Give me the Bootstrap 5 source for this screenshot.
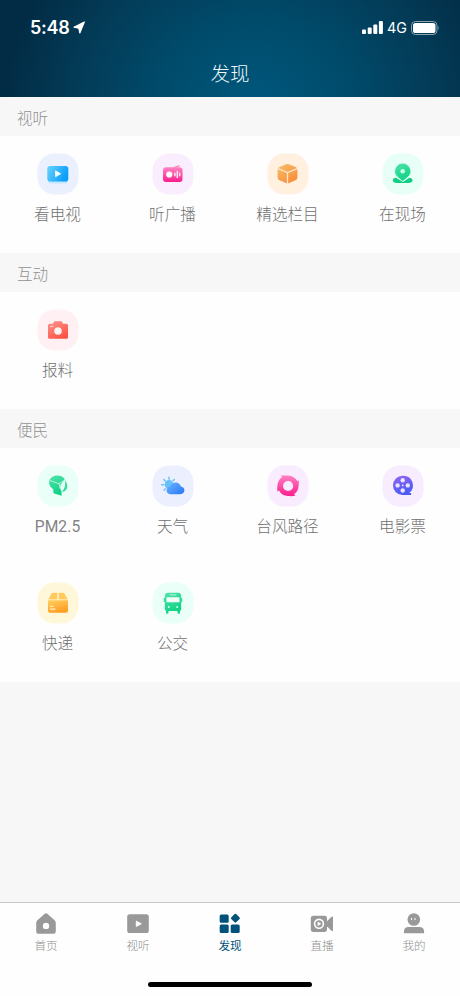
<!DOCTYPE html>
<html lang="zh-CN">
<head>
<meta charset="utf-8">
<meta name="viewport" content="width=device-width, initial-scale=1">
<title>发现</title>
<link href="https://cdn.jsdelivr.net/npm/bootstrap@5.3.0/dist/css/bootstrap.min.css" rel="stylesheet">
<style>
  body{font-family:"Liberation Sans","Noto Sans CJK SC",sans-serif;font-weight:300;background:#f7f7f7;overflow:hidden}
  svg{display:block;flex:none}
  .screen{width:460px;height:996px}
  .top-area{height:97.4px;background:radial-gradient(ellipse 250px 220px at 255px 105px,#00587d 0,#004b6b 38%,#033b57 72%,#022c45 100%)}
  .status{height:55px;padding:0 20px 0 30px}
  .clock{font:600 18px/20px Inter,sans-serif;letter-spacing:-.3px}
  .net{font:400 14.3px/16px Inter,sans-serif}
  .page-title{font-size:19.5px;line-height:39px;color:#eef7fa}
  .sec-title{height:39px;padding-left:17px;font-size:15.6px;line-height:44px;color:#919191}
  .sec-title + .row{background:#fefefe}
  .tile{height:117px;padding-top:17px}
  .tile-name{font-size:15.6px;line-height:22px;margin-top:9px;color:#707070}
  .latin{font-family:Roboto,sans-serif;font-weight:400;color:#838383;letter-spacing:.1px}
  .tabs{height:94px;background:#fefefe;border-top:1px solid #c8c8c8}
  .tab{padding-top:8px;color:#8e8e8e;font-size:11.6px;line-height:16px}
  .tab.on{color:#00527a;font-weight:400}
  .tab svg{margin-bottom:3px}
  .home-bar{width:164px;height:5px;margin-bottom:9px;background:#000}
</style>
<script src="https://cdn.jsdelivr.net/npm/bootstrap@5.3.0/dist/js/bootstrap.bundle.min.js"></script>
</head>
<body>
<svg width="0" height="0" class="position-absolute" aria-hidden="true">
  <defs>
    <linearGradient id="blue" x2="1" y2=".4"><stop stop-color="#68d4fb"/><stop offset="1" stop-color="#0a9dfb"/></linearGradient>
    <linearGradient id="pink" x2="0" y2="1"><stop stop-color="#ff83c2"/><stop offset="1" stop-color="#f91c8c"/></linearGradient>
    <linearGradient id="orange" x2=".7" y2="1"><stop stop-color="#f5c06a"/><stop offset="1" stop-color="#fb8c38"/></linearGradient>
    <linearGradient id="green" x2=".4" y2="1"><stop stop-color="#52e3ab"/><stop offset="1" stop-color="#0fd285"/></linearGradient>
    <linearGradient id="red" x2=".6" y2="1"><stop stop-color="#ff9690"/><stop offset="1" stop-color="#fb5444"/></linearGradient>
    <linearGradient id="cloud" x2="1" y2=".7"><stop stop-color="#6cb5ff"/><stop offset="1" stop-color="#2f7cf8"/></linearGradient>
    <linearGradient id="violet" x2=".3" y2="1"><stop stop-color="#9663ef"/><stop offset="1" stop-color="#4b5bf9"/></linearGradient>
    <linearGradient id="yellow" x2=".4" y2="1"><stop stop-color="#ffd062"/><stop offset="1" stop-color="#ff9f24"/></linearGradient>
  </defs>
</svg>
<div class="screen d-flex flex-column">
  <header class="top-area text-white">
    <div class="status d-flex align-items-center justify-content-between">
      <div class="d-flex align-items-center gap-1">
        <span class="clock">5:48</span>
        <svg width="12" height="13" viewBox="0 0 12 13"><path d="M11.300 1 6.800 12 5.800 7.200 1 6.200Z" fill="#fff" stroke="#fff" stroke-width="1.200" stroke-linejoin="round"/></svg>
      </div>
      <div class="d-flex align-items-center">
        <svg width="21" height="13" viewBox="0 0 21 13" fill="#fff"><rect y="8.600" width="4" height="4.400" rx="1"/><rect x="5.700" y="6.400" width="4" height="6.600" rx="1"/><rect x="11.300" y="3.400" width="4" height="9.600" rx="1"/><rect x="16.900" width="4" height="13" rx="1"/></svg>
        <span class="net ms-1 me-1">4G</span>
        <svg width="29" height="14" viewBox="0 0 29 14"><rect x=".5" y=".5" width="25.500" height="13" rx="4" fill="none" stroke="#8ba5b3"/><rect x="2" y="2" width="22.500" height="10" rx="2.600" fill="#fff"/><path d="M27.300 4.800q1.500 2.200 0 4.400z" fill="#8ba5b3"/></svg>
      </div>
    </div>
    <div class="page-title text-center">发现</div>
  </header>

  <main class="flex-grow-1">
    <section>
      <div class="sec-title">视听</div>
      <div class="row row-cols-4 g-0">
        <div class="tile col d-flex flex-column align-items-center">
          <svg width="42" height="42" viewBox="0 0 42 42"><rect x=".5" y=".5" width="41" height="41" rx="17" fill="#ebf0ff"/><rect x="11" y="15" width="20" height="15.500" rx="3" fill="#9adcff" opacity=".5"/><rect x="10.300" y="13" width="21" height="15.500" rx="2.800" fill="url(#blue)"/><path d="M18.500 17.800v6l5.200-3z" fill="#f2fdff" stroke="#f2fdff" stroke-linejoin="round" stroke-width=".8"/></svg>
          <div class="tile-name">看电视</div>
        </div>
        <div class="tile col d-flex flex-column align-items-center">
          <svg width="42" height="42" viewBox="0 0 42 42"><rect x=".5" y=".5" width="41" height="41" rx="17" fill="#faedfd"/><path d="m22.500 14.500 4.500-1.600" stroke="#ff83c2" stroke-width="1.400" stroke-linecap="round"/><rect x="11" y="14.300" width="19.500" height="14.700" rx="3" fill="url(#pink)"/><circle cx="17.300" cy="21.500" r="3.100" fill="#fff"/><path d="M22.900 20.200v2.600M25.300 18.500v6M27.700 20.200v2.600" stroke="#ffe8f5" stroke-width="1.500" stroke-linecap="round"/></svg>
          <div class="tile-name">听广播</div>
        </div>
        <div class="tile col d-flex flex-column align-items-center">
          <svg width="42" height="42" viewBox="0 0 42 42"><rect x=".5" y=".5" width="41" height="41" rx="17" fill="#fff0df"/><path d="M19 11.300q1.500-.6 3 0l6.500 2.600q1.900.8 1.900 2.800v7.800q0 2-1.900 2.800L22 30q-1.500.6-3 0l-6.500-2.700q-1.900-.8-1.900-2.800v-7.800q0-2 1.900-2.800z" fill="url(#orange)"/><path d="m10.800 15.700 9.700 3.900 9.700-3.900M20.500 19.600V31" fill="none" stroke="#ffe7cd" stroke-width="1.300"/></svg>
          <div class="tile-name">精选栏目</div>
        </div>
        <div class="tile col d-flex flex-column align-items-center">
          <svg width="42" height="42" viewBox="0 0 42 42"><rect x=".5" y=".5" width="41" height="41" rx="17" fill="#e8fff8"/><path d="M14 24.800c-2 .3-3.200 1.200-3.200 2.400 0 1.800 1.600 2.800 4 2.800h11.600c2.500 0 4.100-1 4.100-2.800 0-1.200-1.200-2.100-3.200-2.400L21 29z" fill="#10cf83"/><path d="M20.700 10.300a8 8 0 0 0-8 8c0 4.500 4.200 6.700 8 9.900 3.800-3.200 8-5.400 8-9.900a8 8 0 0 0-8-8z" fill="url(#green)" stroke="#d8fff0" stroke-width=".5"/><circle cx="20.700" cy="18.200" r="2.300" fill="#c5ffe9"/></svg>
          <div class="tile-name">在现场</div>
        </div>
      </div>
    </section>

    <section>
      <div class="sec-title">互动</div>
      <div class="row row-cols-4 g-0">
        <div class="tile col d-flex flex-column align-items-center">
          <svg width="42" height="42" viewBox="0 0 42 42"><rect x=".5" y=".5" width="41" height="41" rx="17" fill="#fff0f3"/><path d="M16 14.700 17.300 12.200h7.400l1.300 2.500h3.500q1.500 0 1.500 1.500v12q0 1.500-1.500 1.500h-17q-1.500 0-1.500-1.500v-12q0-1.500 1.500-1.500z" fill="url(#red)"/><circle cx="21" cy="22" r="3.800" fill="#fff3ef"/><path d="M13 17.500h3.500" stroke="#ffd0ca" stroke-width="1.200"/></svg>
          <div class="tile-name">报料</div>
        </div>
      </div>
    </section>

    <section>
      <div class="sec-title">便民</div>
      <div class="row row-cols-4 g-0">
        <div class="tile col d-flex flex-column align-items-center">
          <svg width="42" height="42" viewBox="0 0 42 42"><rect x=".5" y=".5" width="41" height="41" rx="17" fill="#eafff7"/><path d="M27.800 14C25.500 11 22.300 10 19 10.500c-4.300.7-7.300 3.900-6.800 8 .3 2.600 2 4 4 5.700l.3 4.100 8.200 2.400-.3-4.900c-1.800-2.600-1.700-6.600 1.200-8.300z" fill="url(#green)"/><path d="M28 15.300c2.400 2.900 3 6.500 1.500 9-1 1.600-2.600 2.500-4.400 2.300 2.700-2.700 3.800-6.800 2.900-11.300z" fill="#35d99a"/><path d="m12.800 15.500 9.200 3.200 5.500-3.500M22 18.700l1.200 5" fill="none" stroke="#bff8e0" stroke-width=".9"/></svg>
          <div class="tile-name latin">PM2.5</div>
        </div>
        <div class="tile col d-flex flex-column align-items-center">
          <svg width="42" height="42" viewBox="0 0 42 42"><rect x=".5" y=".5" width="41" height="41" rx="17" fill="#ebeffe"/><circle cx="17" cy="19.500" r="4.400" fill="#67bffc"/><path d="M17 12.300v2M11.800 14.500l1.500 1.500M22.300 14.500l-1.500 1.500M9.700 19.800h2M12 25.200l1.400-1.400" stroke="#67bffc" stroke-width="1.400" stroke-linecap="round"/><path d="M18.800 29.200c-2.400 0-4.300-1.500-4.300-3.800s1.700-3.700 3.700-3.800c1-2.600 3-4 5.400-4 2.700 0 4.600 1.700 5.300 4 2 .2 3.500 1.700 3.500 3.700 0 2.300-1.800 3.900-4 3.900z" fill="url(#cloud)"/></svg>
          <div class="tile-name">天气</div>
        </div>
        <div class="tile col d-flex flex-column align-items-center">
          <svg width="42" height="42" viewBox="0 0 42 42"><rect x=".5" y=".5" width="41" height="41" rx="17" fill="#f9ecff"/><path fill-rule="evenodd" d="M13.300 10.200C16.300 11 18.500 10.300 21 10.400c4.300.2 7.700 2.400 9.300 5.700q.9-.3 1.200-1.400c.7 2.900.2 4.600 0 7-.3 3-1.800 5.600-4.400 7.400q.3 1 1.500 1.400c-3 .9-5 .6-7.600.5-4.200-.2-7.300-2.300-9-5.600q-1 .3-1.200 1.600c-1-3-.5-5.100-.2-7.600.4-2.900 1.700-5.400 4.300-7.200q-.3-1.300-1.600-2zM21.100 15.900a5.100 5.100 0 1 0 0 10.200 5.100 5.100 0 0 0 0-10.200z" fill="url(#pink)"/></svg>
          <div class="tile-name">台风路径</div>
        </div>
        <div class="tile col d-flex flex-column align-items-center">
          <svg width="42" height="42" viewBox="0 0 42 42"><rect x=".5" y=".5" width="41" height="41" rx="17" fill="#f8ecff"/><path d="M20.700 10.700a9.700 9.700 0 1 0 0 19.400h8.400v-2h-2A9.700 9.700 0 0 0 20.700 10.700z" fill="url(#violet)"/><g fill="#e9e4ff"><circle cx="20.700" cy="15.300" r="2.200"/><circle cx="15.600" cy="20.400" r="2.200"/><circle cx="25.800" cy="20.400" r="2.200"/><circle cx="20.700" cy="25.500" r="2.200"/><circle cx="20.700" cy="20.400" r=".9"/></g></svg>
          <div class="tile-name">电影票</div>
        </div>
        <div class="tile col d-flex flex-column align-items-center">
          <svg width="42" height="42" viewBox="0 0 42 42"><rect x=".5" y=".5" width="41" height="41" rx="17" fill="#fff7da"/><path d="m14.500 11.500-3.200 6h9v-6.800h-4.300q-1 0-1.500.8zM27.500 11.500l3.200 6h-9v-6.800H26q1 0 1.500.8z" fill="#ffc95b"/><path d="M11 18.200h20V29q0 1.700-1.700 1.700H12.700Q11 30.700 11 29z" fill="url(#yellow)"/><path d="M13.500 24.300h2.500M13.500 27.200h4.500" stroke="#fff0c8" stroke-width="1.200" stroke-linecap="round"/></svg>
          <div class="tile-name">快递</div>
        </div>
        <div class="tile col d-flex flex-column align-items-center">
          <svg width="42" height="42" viewBox="0 0 42 42"><rect x=".5" y=".5" width="41" height="41" rx="17" fill="#e9fff8"/><path d="M16 10.800h10q3 0 3.200 3V27q0 1.500-1.200 1.800v1.700q0 1.200-1.200 1.200t-1.300-1.200V29h-9v1.500q0 1.200-1.300 1.200T14 30.500v-1.700q-1.200-.3-1.200-1.800V13.800q.2-3 3.200-3z" fill="url(#green)"/><path d="M12.500 16v4M29.500 16v4" stroke="#35dc9c" stroke-width="1.500"/><rect x="14.500" y="15.300" width="13" height="5" rx=".6" fill="#f2fffb"/><path d="M18 12.900h6" stroke="#b5f7dc" stroke-linecap="round"/><circle cx="16.800" cy="25" r="1" fill="#d3ffee"/><circle cx="25.200" cy="25" r="1" fill="#d3ffee"/></svg>
          <div class="tile-name">公交</div>
        </div>
      </div>
    </section>
  </main>

  <nav class="tabs d-flex flex-column justify-content-between align-items-center">
    <div class="row row-cols-5 g-0 w-100 text-center">
      <div class="tab col d-flex flex-column align-items-center">
        <svg width="22" height="24" viewBox="0 0 22 24"><path fill-rule="evenodd" d="M9.400 3q1.600-1.500 3.200 0l7 6.300q1.200 1 1.200 2.600v8q0 2.900-2.900 2.900H4.100q-2.900 0-2.900-2.900v-8q0-1.600 1.200-2.600zM11 11.700a3.200 3.200 0 1 0 0 6.400 3.200 3.200 0 0 0 0-6.400z" fill="#999"/></svg>
        首页
      </div>
      <div class="tab col d-flex flex-column align-items-center">
        <svg width="22" height="24" viewBox="0 0 22 24"><rect x=".2" y="3.200" width="21.600" height="18.800" rx="2.600" fill="#999"/><path d="M9.300 10.200v5.200l5-2.600z" fill="#fff" stroke="#fff" stroke-linejoin="round"/></svg>
        视听
      </div>
      <div class="tab on col d-flex flex-column align-items-center">
        <svg width="22" height="24" viewBox="0 0 22 24" fill="#00527a"><rect x=".7" y="3.400" width="9" height="8.400" rx="1.500"/><rect x=".7" y="13.600" width="9" height="8.400" rx="1.500"/><rect x="11.700" y="13.600" width="9" height="8.400" rx="1.500"/><rect x="12.900" y="3.700" width="7" height="7" rx="1.100" transform="rotate(45 16.400 7.200)"/></svg>
        发现
      </div>
      <div class="tab col d-flex flex-column align-items-center">
        <svg width="24" height="24" viewBox="0 0 24 24"><rect x=".8" y="4.700" width="16.200" height="16.200" rx="2.300" fill="#999"/><path d="m17 10.300 4.200-4.200q1.800-1.600 1.800.4v12.600q0 2-1.800.4L17 15.300z" fill="#999"/><circle cx="9" cy="12.800" r="4.400" fill="none" stroke="#fff" stroke-width="1.600"/><path d="M7.600 10.400v4.800l3.700-2.400z" fill="#fff"/></svg>
        直播
      </div>
      <div class="tab col d-flex flex-column align-items-center">
        <svg width="22" height="24" viewBox="0 0 22 24"><circle cx="10.800" cy="8.500" r="6.300" fill="#999"/><path d="M.9 22.200v-1.500q0-4.700 4.700-4.700h10.800q4.700 0 4.700 4.700v1.500z" fill="#999"/><path d="M8.500 7.400v1M12 7.400v1" stroke="#fff" stroke-linecap="round" stroke-width="1.100"/></svg>
        我的
      </div>
    </div>
    <div class="home-bar rounded-pill"></div>
  </nav>
</div>
</body>
</html>
